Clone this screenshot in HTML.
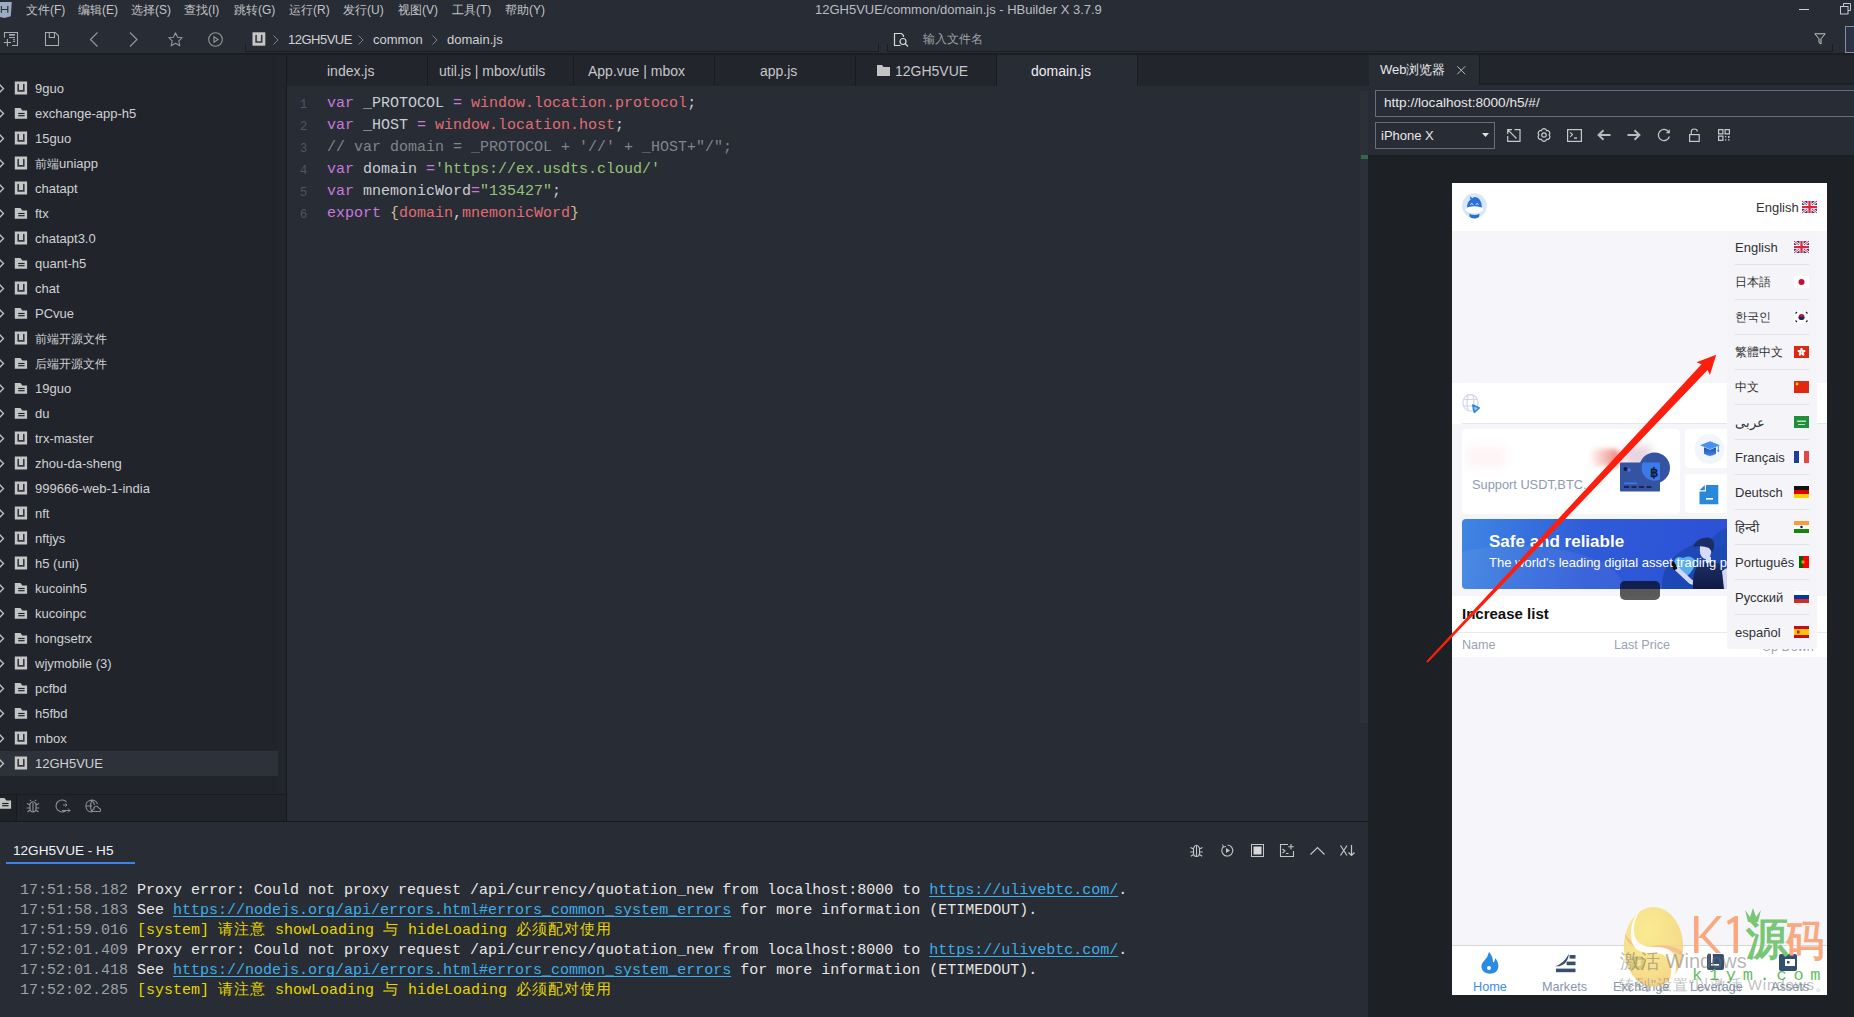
<!DOCTYPE html><html><head><meta charset="utf-8"><style>
*{margin:0;padding:0;box-sizing:border-box}
html,body{width:1854px;height:1017px;overflow:hidden;background:#282c34;font-family:"Liberation Sans",sans-serif;color:#c8c8c8}
.a{position:absolute}
.t{position:absolute;white-space:nowrap;line-height:1}
svg{position:absolute;overflow:visible}
.menu{font-size:12px;color:#c2c4c8;top:4px}
.code{font-family:"Liberation Mono",monospace;font-size:15px;line-height:22px;white-space:pre;position:absolute}
.kw{color:#c678dd}.rd{color:#e06c75}.gr{color:#98c379}.cm{color:#7f848e}.pl{color:#c9ccd2}.br{color:#d4bf8f}
.ln{position:absolute;font-family:"Liberation Mono",monospace;font-size:12px;color:#4f5663;line-height:22px;white-space:nowrap}
.tx{position:absolute;font-size:13px;color:#cfd1d4;white-space:nowrap;line-height:1}
.con{font-family:"Liberation Mono",monospace;font-size:15px;line-height:20px;white-space:pre;position:absolute;color:#e6e6e6}
.con .ts{color:#9da2a8}
.con u{color:#3eaee8;text-underline-offset:1.5px;text-decoration-skip-ink:none}
.con .y{color:#e5d600}
.cj{letter-spacing:1px}
.tab{position:absolute;top:55px;height:31px;background:#22252b;border-right:1px solid #191b1f}
.tab .tt{position:absolute;top:9px;font-size:13px;color:#c5c7ca;white-space:nowrap;line-height:1}
.ph{font-family:"Liberation Sans",sans-serif}
.dd{position:absolute;left:1735px;font-size:13px;color:#303133;white-space:nowrap;line-height:1}
.sep{position:absolute;left:1735px;width:74px;height:1px;background:#dfe3ea}
</style></head><body>
<div class="a" style="left:0px;top:0px;width:1854px;height:54px;background:#282c34;"></div>
<div class="a" style="left:0px;top:53px;width:1854px;height:2px;background:#1b1d22;"></div>
<div class="a" style="left:0px;top:55px;width:286px;height:739px;background:#22262c;"></div>
<div class="a" style="left:0px;top:55px;width:278px;height:739px;background:#21252b;"></div>
<div class="a" style="left:0px;top:794px;width:286px;height:1px;background:#1a1c21;"></div>
<div class="a" style="left:0px;top:795px;width:286px;height:26px;background:#21252b;"></div>
<div class="a" style="left:286px;top:55px;width:1px;height:766px;background:#17191d;"></div>
<div class="a" style="left:287px;top:55px;width:1081px;height:31px;background:#22252b;"></div>
<div class="a" style="left:287px;top:86px;width:1081px;height:735px;background:#282c34;"></div>
<div class="a" style="left:1360px;top:91px;width:8px;height:632px;background:#2c3039;"></div>
<div class="a" style="left:1361px;top:155px;width:7px;height:4px;background:#2f6b4b;"></div>
<div class="a" style="left:1368px;top:55px;width:1px;height:962px;background:#191b1f;"></div>
<div class="a" style="left:0px;top:821px;width:1368px;height:1px;background:#17191d;"></div>
<div class="a" style="left:0px;top:822px;width:1368px;height:195px;background:#282c34;"></div>
<div class="a" style="left:1368px;top:55px;width:486px;height:962px;background:#1d2025;"></div>
<svg style="left:0;top:0" width="14" height="20" viewBox="0 0 14 20"><path d="M-2 2H11.8L10.8 16.3L4.5 17.9L-2 16.5Z" fill="#9cabc4"/><path d="M1.4 6V12.8M7.8 6V12.8M1.4 9.5H7.8" stroke="#2a2e36" stroke-width="1.15"/></svg>
<div class="t menu" style="left:26px">文件(F)</div>
<div class="t menu" style="left:78px">编辑(E)</div>
<div class="t menu" style="left:131px">选择(S)</div>
<div class="t menu" style="left:184px">查找(I)</div>
<div class="t menu" style="left:234px">跳转(G)</div>
<div class="t menu" style="left:289px">运行(R)</div>
<div class="t menu" style="left:343px">发行(U)</div>
<div class="t menu" style="left:398px">视图(V)</div>
<div class="t menu" style="left:452px">工具(T)</div>
<div class="t menu" style="left:505px">帮助(Y)</div>
<div class="t menu" style="left:815px;top:3px;font-size:13px;color:#b8bcc3">12GH5VUE/common/domain.js - HBuilder X 3.7.9</div>
<div class="a" style="left:1799px;top:9px;width:10px;height:1px;background:#c8d0de;"></div>
<svg style="left:1840px;top:3px" width="12" height="12"><path d="M3.5 3.5V0.5H10.5V7.5H8" fill="none" stroke="#c0c8d8" stroke-width="1"/><rect x="0.5" y="3.5" width="7.5" height="7.5" fill="none" stroke="#c0c8d8" stroke-width="1"/></svg>
<svg style="left:0;top:26px" width="20" height="22"><path d="M4.5 11.8V6.5H17.5V19.5H12" fill="none" stroke="#a9acb2" stroke-width="1.1"/><rect x="9" y="8" width="6" height="1.7" fill="#a9acb2"/><rect x="9" y="11.1" width="6" height="1" fill="#a9acb2"/><rect x="13" y="13.2" width="2" height="1" fill="#a9acb2"/><rect x="13" y="15" width="2" height="1" fill="#a9acb2"/><path d="M7.4 13V20.2M3.8 16.5H11" stroke="#a9acb2" stroke-width="1.1"/></svg>
<svg style="left:45px;top:32px" width="15" height="15"><path d="M0.5 0.5H10.2L13.5 3.8V13.5H0.5Z M4.3 0.5V5.5H9.5V0.5" fill="none" stroke="#a9acb2" stroke-width="1.05"/></svg>
<svg style="left:89px;top:31.5px" width="10" height="15"><path d="M8.5 0.5L1.5 7.5L8.5 14.5" fill="none" stroke="#93969c" stroke-width="1.2"/></svg>
<svg style="left:129px;top:31.5px" width="10" height="15"><path d="M1 0.5L8 7.5L1 14.5" fill="none" stroke="#93969c" stroke-width="1.2"/></svg>
<svg style="left:168px;top:31.5px" width="15" height="15"><path d="M7.5 0.8L9.6 5.2L14.3 5.7L10.8 8.9L11.8 13.8L7.5 11.3L3.2 13.8L4.2 8.9L0.7 5.7L5.4 5.2Z" fill="none" stroke="#93969c" stroke-width="1.1" stroke-linejoin="round"/></svg>
<svg style="left:208px;top:31.5px" width="15" height="15"><circle cx="7.5" cy="7.5" r="6.8" fill="none" stroke="#93969c" stroke-width="1.1"/><path d="M6 4.8V10.2L10 7.5Z" fill="none" stroke="#93969c" stroke-width="1.1"/></svg>
<div class="a" style="left:245px;top:44px;width:1px;height:8px;background:#1a1c21;"></div>
<div class="a" style="left:245px;top:51px;width:634px;height:1px;background:#1a1c21;"></div>
<div class="a" style="left:878px;top:44px;width:1px;height:8px;background:#1a1c21;"></div>
<div class="a" style="left:887px;top:44px;width:1px;height:8px;background:#1a1c21;"></div>
<div class="a" style="left:887px;top:51px;width:946px;height:1px;background:#1a1c21;"></div>
<div class="a" style="left:1832px;top:44px;width:1px;height:8px;background:#1a1c21;"></div>
<svg style="left:252px;top:32px" width="14" height="14"><rect x="0.5" y="0.3" width="12.8" height="13.4" fill="#c6c6c6"/><path d="M4.1 3.5V10H9.7V3.5" fill="none" stroke="#34373e" stroke-width="1.6" stroke-linecap="round"/></svg>
<svg style="left:273px;top:35px" width="6" height="10"><path d="M0.5 0.5L5 5L0.5 9.5" fill="none" stroke="#7d8087"/></svg>
<div class="t" style="left:288px;top:33px;font-size:13px;color:#cfd1d4;letter-spacing:-0.5px">12GH5VUE</div>
<svg style="left:358px;top:35px" width="6" height="10"><path d="M0.5 0.5L5 5L0.5 9.5" fill="none" stroke="#7d8087"/></svg>
<div class="t" style="left:373px;top:33px;font-size:13px;color:#cfd1d4">common</div>
<svg style="left:432px;top:35px" width="6" height="10"><path d="M0.5 0.5L5 5L0.5 9.5" fill="none" stroke="#7d8087"/></svg>
<div class="t" style="left:447px;top:33px;font-size:13px;color:#cfd1d4">domain.js</div>
<svg style="left:894px;top:33px" width="16" height="14"><path d="M6.5 12.5H0.5V0.5H7.5L9.5 2.5V4" fill="none" stroke="#d8d8d8" stroke-width="1.2"/><circle cx="9" cy="8.5" r="3" fill="none" stroke="#d8d8d8" stroke-width="1.2"/><path d="M11.2 10.7L14 13.5" stroke="#d8d8d8" stroke-width="1.2"/></svg>
<div class="t" style="left:923px;top:33px;font-size:12px;color:#9fa2a8">输入文件名</div>
<svg style="left:1814px;top:33px" width="12" height="12"><path d="M0.8 0.8H11.2L7 5.8V11L5 9.5V5.8Z" fill="none" stroke="#c8c8c8" stroke-width="1"/></svg>
<div class="a" style="left:1845px;top:26px;width:12px;height:27px;background:#2b3245;border:1px solid #858fa3"></div>
<svg style="left:-1px;top:84px" width="6" height="10"><path d="M0.5 0.5L4.5 4.5L0.5 8.5" fill="none" stroke="#c4c4c4" stroke-width="1.3"/></svg>
<svg style="left:14px;top:81px" width="14" height="14"><rect x="0.8" y="0.5" width="12.3" height="13" fill="#c6c6c6"/><path d="M4.2 3.6V9.9H9.8V3.6" fill="none" stroke="#34373e" stroke-width="1.6" stroke-linecap="round"/></svg>
<div class="tx" style="left:35px;top:82px">9guo</div>
<svg style="left:-1px;top:109px" width="6" height="10"><path d="M0.5 0.5L4.5 4.5L0.5 8.5" fill="none" stroke="#c4c4c4" stroke-width="1.3"/></svg>
<svg style="left:14px;top:108px" width="14" height="12"><path d="M0.8 0H6.5L8.3 2.5H13.1V10.7H0.8Z" fill="#c4c4c4"/><rect x="4.2" y="4.9" width="6.4" height="1.2" fill="#21252b"/><rect x="4.2" y="7.1" width="6.4" height="1.2" fill="#21252b"/></svg>
<div class="tx" style="left:35px;top:107px">exchange-app-h5</div>
<svg style="left:-1px;top:134px" width="6" height="10"><path d="M0.5 0.5L4.5 4.5L0.5 8.5" fill="none" stroke="#c4c4c4" stroke-width="1.3"/></svg>
<svg style="left:14px;top:131px" width="14" height="14"><rect x="0.8" y="0.5" width="12.3" height="13" fill="#c6c6c6"/><path d="M4.2 3.6V9.9H9.8V3.6" fill="none" stroke="#34373e" stroke-width="1.6" stroke-linecap="round"/></svg>
<div class="tx" style="left:35px;top:132px">15guo</div>
<svg style="left:-1px;top:159px" width="6" height="10"><path d="M0.5 0.5L4.5 4.5L0.5 8.5" fill="none" stroke="#c4c4c4" stroke-width="1.3"/></svg>
<svg style="left:14px;top:156px" width="14" height="14"><rect x="0.8" y="0.5" width="12.3" height="13" fill="#c6c6c6"/><path d="M4.2 3.6V9.9H9.8V3.6" fill="none" stroke="#34373e" stroke-width="1.6" stroke-linecap="round"/></svg>
<div class="tx" style="left:35px;top:157px"><span style="font-size:12px">前端</span>uniapp</div>
<svg style="left:-1px;top:184px" width="6" height="10"><path d="M0.5 0.5L4.5 4.5L0.5 8.5" fill="none" stroke="#c4c4c4" stroke-width="1.3"/></svg>
<svg style="left:14px;top:181px" width="14" height="14"><rect x="0.8" y="0.5" width="12.3" height="13" fill="#c6c6c6"/><path d="M4.2 3.6V9.9H9.8V3.6" fill="none" stroke="#34373e" stroke-width="1.6" stroke-linecap="round"/></svg>
<div class="tx" style="left:35px;top:182px">chatapt</div>
<svg style="left:-1px;top:209px" width="6" height="10"><path d="M0.5 0.5L4.5 4.5L0.5 8.5" fill="none" stroke="#c4c4c4" stroke-width="1.3"/></svg>
<svg style="left:14px;top:208px" width="14" height="12"><path d="M0.8 0H6.5L8.3 2.5H13.1V10.7H0.8Z" fill="#c4c4c4"/><rect x="4.2" y="4.9" width="6.4" height="1.2" fill="#21252b"/><rect x="4.2" y="7.1" width="6.4" height="1.2" fill="#21252b"/></svg>
<div class="tx" style="left:35px;top:207px">ftx</div>
<svg style="left:-1px;top:234px" width="6" height="10"><path d="M0.5 0.5L4.5 4.5L0.5 8.5" fill="none" stroke="#c4c4c4" stroke-width="1.3"/></svg>
<svg style="left:14px;top:231px" width="14" height="14"><rect x="0.8" y="0.5" width="12.3" height="13" fill="#c6c6c6"/><path d="M4.2 3.6V9.9H9.8V3.6" fill="none" stroke="#34373e" stroke-width="1.6" stroke-linecap="round"/></svg>
<div class="tx" style="left:35px;top:232px">chatapt3.0</div>
<svg style="left:-1px;top:259px" width="6" height="10"><path d="M0.5 0.5L4.5 4.5L0.5 8.5" fill="none" stroke="#c4c4c4" stroke-width="1.3"/></svg>
<svg style="left:14px;top:258px" width="14" height="12"><path d="M0.8 0H6.5L8.3 2.5H13.1V10.7H0.8Z" fill="#c4c4c4"/><rect x="4.2" y="4.9" width="6.4" height="1.2" fill="#21252b"/><rect x="4.2" y="7.1" width="6.4" height="1.2" fill="#21252b"/></svg>
<div class="tx" style="left:35px;top:257px">quant-h5</div>
<svg style="left:-1px;top:284px" width="6" height="10"><path d="M0.5 0.5L4.5 4.5L0.5 8.5" fill="none" stroke="#c4c4c4" stroke-width="1.3"/></svg>
<svg style="left:14px;top:281px" width="14" height="14"><rect x="0.8" y="0.5" width="12.3" height="13" fill="#c6c6c6"/><path d="M4.2 3.6V9.9H9.8V3.6" fill="none" stroke="#34373e" stroke-width="1.6" stroke-linecap="round"/></svg>
<div class="tx" style="left:35px;top:282px">chat</div>
<svg style="left:-1px;top:309px" width="6" height="10"><path d="M0.5 0.5L4.5 4.5L0.5 8.5" fill="none" stroke="#c4c4c4" stroke-width="1.3"/></svg>
<svg style="left:14px;top:308px" width="14" height="12"><path d="M0.8 0H6.5L8.3 2.5H13.1V10.7H0.8Z" fill="#c4c4c4"/><rect x="4.2" y="4.9" width="6.4" height="1.2" fill="#21252b"/><rect x="4.2" y="7.1" width="6.4" height="1.2" fill="#21252b"/></svg>
<div class="tx" style="left:35px;top:307px">PCvue</div>
<svg style="left:-1px;top:334px" width="6" height="10"><path d="M0.5 0.5L4.5 4.5L0.5 8.5" fill="none" stroke="#c4c4c4" stroke-width="1.3"/></svg>
<svg style="left:14px;top:331px" width="14" height="14"><rect x="0.8" y="0.5" width="12.3" height="13" fill="#c6c6c6"/><path d="M4.2 3.6V9.9H9.8V3.6" fill="none" stroke="#34373e" stroke-width="1.6" stroke-linecap="round"/></svg>
<div class="tx" style="left:35px;top:332px"><span style="font-size:12px">前端开源文件</span></div>
<svg style="left:-1px;top:359px" width="6" height="10"><path d="M0.5 0.5L4.5 4.5L0.5 8.5" fill="none" stroke="#c4c4c4" stroke-width="1.3"/></svg>
<svg style="left:14px;top:358px" width="14" height="12"><path d="M0.8 0H6.5L8.3 2.5H13.1V10.7H0.8Z" fill="#c4c4c4"/><rect x="4.2" y="4.9" width="6.4" height="1.2" fill="#21252b"/><rect x="4.2" y="7.1" width="6.4" height="1.2" fill="#21252b"/></svg>
<div class="tx" style="left:35px;top:357px"><span style="font-size:12px">后端开源文件</span></div>
<svg style="left:-1px;top:384px" width="6" height="10"><path d="M0.5 0.5L4.5 4.5L0.5 8.5" fill="none" stroke="#c4c4c4" stroke-width="1.3"/></svg>
<svg style="left:14px;top:383px" width="14" height="12"><path d="M0.8 0H6.5L8.3 2.5H13.1V10.7H0.8Z" fill="#c4c4c4"/><rect x="4.2" y="4.9" width="6.4" height="1.2" fill="#21252b"/><rect x="4.2" y="7.1" width="6.4" height="1.2" fill="#21252b"/></svg>
<div class="tx" style="left:35px;top:382px">19guo</div>
<svg style="left:-1px;top:409px" width="6" height="10"><path d="M0.5 0.5L4.5 4.5L0.5 8.5" fill="none" stroke="#c4c4c4" stroke-width="1.3"/></svg>
<svg style="left:14px;top:408px" width="14" height="12"><path d="M0.8 0H6.5L8.3 2.5H13.1V10.7H0.8Z" fill="#c4c4c4"/><rect x="4.2" y="4.9" width="6.4" height="1.2" fill="#21252b"/><rect x="4.2" y="7.1" width="6.4" height="1.2" fill="#21252b"/></svg>
<div class="tx" style="left:35px;top:407px">du</div>
<svg style="left:-1px;top:434px" width="6" height="10"><path d="M0.5 0.5L4.5 4.5L0.5 8.5" fill="none" stroke="#c4c4c4" stroke-width="1.3"/></svg>
<svg style="left:14px;top:431px" width="14" height="14"><rect x="0.8" y="0.5" width="12.3" height="13" fill="#c6c6c6"/><path d="M4.2 3.6V9.9H9.8V3.6" fill="none" stroke="#34373e" stroke-width="1.6" stroke-linecap="round"/></svg>
<div class="tx" style="left:35px;top:432px">trx-master</div>
<svg style="left:-1px;top:459px" width="6" height="10"><path d="M0.5 0.5L4.5 4.5L0.5 8.5" fill="none" stroke="#c4c4c4" stroke-width="1.3"/></svg>
<svg style="left:14px;top:456px" width="14" height="14"><rect x="0.8" y="0.5" width="12.3" height="13" fill="#c6c6c6"/><path d="M4.2 3.6V9.9H9.8V3.6" fill="none" stroke="#34373e" stroke-width="1.6" stroke-linecap="round"/></svg>
<div class="tx" style="left:35px;top:457px">zhou-da-sheng</div>
<svg style="left:-1px;top:484px" width="6" height="10"><path d="M0.5 0.5L4.5 4.5L0.5 8.5" fill="none" stroke="#c4c4c4" stroke-width="1.3"/></svg>
<svg style="left:14px;top:481px" width="14" height="14"><rect x="0.8" y="0.5" width="12.3" height="13" fill="#c6c6c6"/><path d="M4.2 3.6V9.9H9.8V3.6" fill="none" stroke="#34373e" stroke-width="1.6" stroke-linecap="round"/></svg>
<div class="tx" style="left:35px;top:482px">999666-web-1-india</div>
<svg style="left:-1px;top:509px" width="6" height="10"><path d="M0.5 0.5L4.5 4.5L0.5 8.5" fill="none" stroke="#c4c4c4" stroke-width="1.3"/></svg>
<svg style="left:14px;top:506px" width="14" height="14"><rect x="0.8" y="0.5" width="12.3" height="13" fill="#c6c6c6"/><path d="M4.2 3.6V9.9H9.8V3.6" fill="none" stroke="#34373e" stroke-width="1.6" stroke-linecap="round"/></svg>
<div class="tx" style="left:35px;top:507px">nft</div>
<svg style="left:-1px;top:534px" width="6" height="10"><path d="M0.5 0.5L4.5 4.5L0.5 8.5" fill="none" stroke="#c4c4c4" stroke-width="1.3"/></svg>
<svg style="left:14px;top:531px" width="14" height="14"><rect x="0.8" y="0.5" width="12.3" height="13" fill="#c6c6c6"/><path d="M4.2 3.6V9.9H9.8V3.6" fill="none" stroke="#34373e" stroke-width="1.6" stroke-linecap="round"/></svg>
<div class="tx" style="left:35px;top:532px">nftjys</div>
<svg style="left:-1px;top:559px" width="6" height="10"><path d="M0.5 0.5L4.5 4.5L0.5 8.5" fill="none" stroke="#c4c4c4" stroke-width="1.3"/></svg>
<svg style="left:14px;top:556px" width="14" height="14"><rect x="0.8" y="0.5" width="12.3" height="13" fill="#c6c6c6"/><path d="M4.2 3.6V9.9H9.8V3.6" fill="none" stroke="#34373e" stroke-width="1.6" stroke-linecap="round"/></svg>
<div class="tx" style="left:35px;top:557px">h5 (uni)</div>
<svg style="left:-1px;top:584px" width="6" height="10"><path d="M0.5 0.5L4.5 4.5L0.5 8.5" fill="none" stroke="#c4c4c4" stroke-width="1.3"/></svg>
<svg style="left:14px;top:583px" width="14" height="12"><path d="M0.8 0H6.5L8.3 2.5H13.1V10.7H0.8Z" fill="#c4c4c4"/><rect x="4.2" y="4.9" width="6.4" height="1.2" fill="#21252b"/><rect x="4.2" y="7.1" width="6.4" height="1.2" fill="#21252b"/></svg>
<div class="tx" style="left:35px;top:582px">kucoinh5</div>
<svg style="left:-1px;top:609px" width="6" height="10"><path d="M0.5 0.5L4.5 4.5L0.5 8.5" fill="none" stroke="#c4c4c4" stroke-width="1.3"/></svg>
<svg style="left:14px;top:608px" width="14" height="12"><path d="M0.8 0H6.5L8.3 2.5H13.1V10.7H0.8Z" fill="#c4c4c4"/><rect x="4.2" y="4.9" width="6.4" height="1.2" fill="#21252b"/><rect x="4.2" y="7.1" width="6.4" height="1.2" fill="#21252b"/></svg>
<div class="tx" style="left:35px;top:607px">kucoinpc</div>
<svg style="left:-1px;top:634px" width="6" height="10"><path d="M0.5 0.5L4.5 4.5L0.5 8.5" fill="none" stroke="#c4c4c4" stroke-width="1.3"/></svg>
<svg style="left:14px;top:633px" width="14" height="12"><path d="M0.8 0H6.5L8.3 2.5H13.1V10.7H0.8Z" fill="#c4c4c4"/><rect x="4.2" y="4.9" width="6.4" height="1.2" fill="#21252b"/><rect x="4.2" y="7.1" width="6.4" height="1.2" fill="#21252b"/></svg>
<div class="tx" style="left:35px;top:632px">hongsetrx</div>
<svg style="left:-1px;top:659px" width="6" height="10"><path d="M0.5 0.5L4.5 4.5L0.5 8.5" fill="none" stroke="#c4c4c4" stroke-width="1.3"/></svg>
<svg style="left:14px;top:656px" width="14" height="14"><rect x="0.8" y="0.5" width="12.3" height="13" fill="#c6c6c6"/><path d="M4.2 3.6V9.9H9.8V3.6" fill="none" stroke="#34373e" stroke-width="1.6" stroke-linecap="round"/></svg>
<div class="tx" style="left:35px;top:657px">wjymobile (3)</div>
<svg style="left:-1px;top:684px" width="6" height="10"><path d="M0.5 0.5L4.5 4.5L0.5 8.5" fill="none" stroke="#c4c4c4" stroke-width="1.3"/></svg>
<svg style="left:14px;top:683px" width="14" height="12"><path d="M0.8 0H6.5L8.3 2.5H13.1V10.7H0.8Z" fill="#c4c4c4"/><rect x="4.2" y="4.9" width="6.4" height="1.2" fill="#21252b"/><rect x="4.2" y="7.1" width="6.4" height="1.2" fill="#21252b"/></svg>
<div class="tx" style="left:35px;top:682px">pcfbd</div>
<svg style="left:-1px;top:709px" width="6" height="10"><path d="M0.5 0.5L4.5 4.5L0.5 8.5" fill="none" stroke="#c4c4c4" stroke-width="1.3"/></svg>
<svg style="left:14px;top:708px" width="14" height="12"><path d="M0.8 0H6.5L8.3 2.5H13.1V10.7H0.8Z" fill="#c4c4c4"/><rect x="4.2" y="4.9" width="6.4" height="1.2" fill="#21252b"/><rect x="4.2" y="7.1" width="6.4" height="1.2" fill="#21252b"/></svg>
<div class="tx" style="left:35px;top:707px">h5fbd</div>
<svg style="left:-1px;top:734px" width="6" height="10"><path d="M0.5 0.5L4.5 4.5L0.5 8.5" fill="none" stroke="#c4c4c4" stroke-width="1.3"/></svg>
<svg style="left:14px;top:731px" width="14" height="14"><rect x="0.8" y="0.5" width="12.3" height="13" fill="#c6c6c6"/><path d="M4.2 3.6V9.9H9.8V3.6" fill="none" stroke="#34373e" stroke-width="1.6" stroke-linecap="round"/></svg>
<div class="tx" style="left:35px;top:732px">mbox</div>
<div class="a" style="left:0px;top:751px;width:278px;height:25px;background:#2d3139;"></div>
<svg style="left:-1px;top:759px" width="6" height="10"><path d="M0.5 0.5L4.5 4.5L0.5 8.5" fill="none" stroke="#c4c4c4" stroke-width="1.3"/></svg>
<svg style="left:14px;top:756px" width="14" height="14"><rect x="0.8" y="0.5" width="12.3" height="13" fill="#c6c6c6"/><path d="M4.2 3.6V9.9H9.8V3.6" fill="none" stroke="#34373e" stroke-width="1.6" stroke-linecap="round"/></svg>
<div class="tx" style="left:35px;top:757px">12GH5VUE</div>
<div class="a" style="left:0;top:795px;width:17px;height:27px;background:#1f2227;border-right:1px solid #191b1f;border-bottom:1px solid #191b1f;border-bottom-right-radius:3px"></div>
<svg style="left:-2px;top:798px" width="14" height="12"><path d="M0.8 0H6.5L8.3 2.5H13.1V10.7H0.8Z" fill="#c4c4c4"/><rect x="4.2" y="4.9" width="6.4" height="1.2" fill="#1f2227"/><rect x="4.2" y="7.1" width="6.4" height="1.2" fill="#1f2227"/></svg>
<svg style="left:26px;top:799px" width="14" height="14"><path d="M4 4.5Q7 1 10 4.5V9.5Q10 13 7 13Q4 13 4 9.5Z M7 4V13 M4 6L1 4.5M10 6L13 4.5M4 9H0.8M10 9H13.2M4 11L1.5 13M10 11L12.5 13M5 2L4 0.8M9 2L10 0.8" fill="none" stroke="#8e9197" stroke-width="1.1"/></svg>
<svg style="left:55px;top:799px" width="16" height="14"><path d="M11.5 3A6 6 0 1 0 11 11.5" fill="none" stroke="#8e9197" stroke-width="1.1"/><path d="M7 11.5H15M13 9.5L15 11.5L13 13.5M8 6H12M10.5 4.5L12 6L10.5 7.5" fill="none" stroke="#8e9197" stroke-width="1"/></svg>
<svg style="left:85px;top:799px" width="16" height="14"><path d="M7 13A6 6 0 1 1 12.5 5M1 7H7M7 1Q4 7 7 13M7 1Q9 4 9.5 6" fill="none" stroke="#8e9197" stroke-width="1.1"/><path d="M7 12.5H14.5Q16 12.5 15.5 10.5Q15 9 13.5 9Q12.5 6.5 10.5 7.5Q8.5 8 9 10Q7 10.5 7 12.5Z" fill="none" stroke="#8e9197" stroke-width="1.1"/></svg>
<div class="tab" style="left:288px;width:140px;background:#22252b"></div>
<div class="tab" style="left:428px;width:146px;background:#22252b"></div>
<div class="tab" style="left:574px;width:141px;background:#22252b"></div>
<div class="tab" style="left:715px;width:141px;background:#22252b"></div>
<div class="tab" style="left:856px;width:141px;background:#22252b"></div>
<div class="tab" style="left:997px;width:141px;background:#282c34"></div>
<div class="t" style="left:327px;top:64px;font-size:14px;color:#c5c7ca">index.js</div>
<div class="t" style="left:439px;top:64px;font-size:14px;color:#c5c7ca">util.js | mbox/utils</div>
<div class="t" style="left:588px;top:64px;font-size:14px;color:#c5c7ca">App.vue | mbox</div>
<div class="t" style="left:760px;top:64px;font-size:14px;color:#c5c7ca">app.js</div>
<div class="t" style="left:895px;top:64px;font-size:14px;color:#c5c7ca">12GH5VUE</div>
<div class="t" style="left:1031px;top:64px;font-size:14px;color:#eceef1">domain.js</div>
<svg style="left:877px;top:65px" width="13" height="11"><path d="M0 0H5L6.5 2H13V11H0Z" fill="#c4c4c4"/></svg>
<div class="ln" style="left:300px;top:94px">1<br>2<br>3<br>4<br>5<br>6</div>
<div class="code" style="left:327px;top:93px"><span class="kw">var</span><span class="pl"> _PROTOCOL </span><span class="kw">=</span> <span class="rd">window.location.protocol</span><span class="pl">;</span>
<span class="kw">var</span><span class="pl"> _HOST </span><span class="kw">=</span> <span class="rd">window.location.host</span><span class="pl">;</span>
<span class="cm">// var domain = _PROTOCOL + '//' + _HOST+"/";</span>
<span class="kw">var</span><span class="pl"> domain </span><span class="kw">=</span><span class="gr">'https://ex.usdts.cloud/'</span>
<span class="kw">var</span><span class="pl"> mnemonicWord</span><span class="kw">=</span><span class="gr">"135427"</span><span class="pl">;</span>
<span class="kw">export</span> <span class="br">{</span><span class="rd">domain</span><span class="pl">,</span><span class="rd">mnemonicWord</span><span class="br">}</span></div>
<div class="t" style="left:13px;top:844px;font-size:13.6px;color:#f0f2f4">12GH5VUE - H5</div>
<div class="a" style="left:6px;top:862px;width:129px;height:1.5px;background:#3f80ea;"></div>
<svg style="left:1190px;top:843px" width="13" height="14"><path d="M3.5 5Q6.5 -0.5 9.5 5V10Q9.5 13.5 6.5 13.5Q3.5 13.5 3.5 10Z M6.5 3V13.5M3.5 6L0.5 4.5M9.5 6L12.5 4.5M3.5 9H0.3M9.5 9H12.7M3.5 11.5L0.8 13.3M9.5 11.5L12.2 13.3" fill="none" stroke="#c4c6ca" stroke-width="1.1"/></svg>
<svg style="left:1221px;top:844px" width="13" height="13"><path d="M2.5 2.5A5.5 5.5 0 1 0 6.5 1" fill="none" stroke="#c4c6ca" stroke-width="1.1"/><path d="M1.5 0.5L2.5 3L5 2.5" fill="none" stroke="#c4c6ca" stroke-width="1"/><path d="M5 4V9L9 6.5Z" fill="#c4c6ca"/></svg>
<svg style="left:1251px;top:844px" width="13" height="13"><rect x="0.5" y="0.5" width="12" height="12" fill="none" stroke="#c4c6ca"/><rect x="2.5" y="2.5" width="8" height="8" fill="#d8d8d8"/></svg>
<svg style="left:1280px;top:844px" width="15" height="13"><path d="M8 0.5H0.5V12.5H13.5V7" fill="none" stroke="#c4c6ca" stroke-width="1.1"/><path d="M2.5 5L5 7L2.5 9M6 9.5H8.5M11 0V5.5M8.3 2.8H13.7" fill="none" stroke="#c4c6ca" stroke-width="1.1"/></svg>
<svg style="left:1310px;top:846px" width="15" height="9"><path d="M0.5 8.5L7.5 1.5L14.5 8.5" fill="none" stroke="#c4c6ca" stroke-width="1.2"/></svg>
<svg style="left:1340px;top:845px" width="15" height="11"><path d="M0.5 0.5L7 10.5M7 0.5L0.5 10.5M11.5 0V10.5M8.5 7.5L11.5 10.5L14.5 7.5" fill="none" stroke="#c4c6ca" stroke-width="1.2"/></svg>
<div class="con" style="left:20px;top:881px"><span class="ts">17:51:58.182</span> Proxy error: Could not proxy request /api/currency/quotation_new from localhost:8000 to <u>https://ulivebtc.com/</u>.
<span class="ts">17:51:58.183</span> See <u>https://nodejs.org/api/errors.html#errors_common_system_errors</u> for more information (ETIMEDOUT).
<span class="ts">17:51:59.016</span> <span class="y">[system] <span class="cj">请注意</span> showLoading <span class="cj">与</span> hideLoading <span class="cj">必须配对使用</span></span>
<span class="ts">17:52:01.409</span> Proxy error: Could not proxy request /api/currency/quotation_new from localhost:8000 to <u>https://ulivebtc.com/</u>.
<span class="ts">17:52:01.418</span> See <u>https://nodejs.org/api/errors.html#errors_common_system_errors</u> for more information (ETIMEDOUT).
<span class="ts">17:52:02.285</span> <span class="y">[system] <span class="cj">请注意</span> showLoading <span class="cj">与</span> hideLoading <span class="cj">必须配对使用</span></span></div>
<div class="a" style="left:1368px;top:55px;width:486px;height:28px;background:#22252b;"></div>
<div class="a" style="left:1369px;top:55px;width:110px;height:30px;background:#282c34;"></div>
<div class="a" style="left:1479px;top:55px;width:1px;height:30px;background:#191b1f;"></div>
<div class="a" style="left:1368px;top:85px;width:486px;height:70px;background:#282c34;"></div>
<div class="t" style="left:1380px;top:63px;font-size:13px;color:#e6e8ea">Web浏览器</div>
<svg style="left:1457px;top:66px" width="9" height="9"><path d="M0.3 0.3L8.2 8.2M8.2 0.3L0.3 8.2" stroke="#c8c8c8" stroke-width="0.9"/></svg>
<div class="a" style="left:1375px;top:90px;width:490px;height:27px;border:1px solid #666e80;background:#282c34"></div>
<div class="t" style="left:1384px;top:96px;font-size:13.6px;color:#e6e8ea">http://localhost:8000/h5/#/</div>
<div class="a" style="left:1375px;top:122px;width:120px;height:27px;border:1px solid #666e80;background:#282c34"></div>
<div class="t" style="left:1381px;top:129px;font-size:13px;color:#e6e8ea">iPhone X</div>
<svg style="left:1482px;top:133px" width="7" height="4"><path d="M0 0H7L3.5 4Z" fill="#e0e0e0"/></svg>
<svg style="left:1507px;top:129px" width="14" height="13"><path d="M0.7 5V0.7H5M0.7 0.7L9.5 9.5M0.7 7V12.3H13V0.7H7.5" fill="none" stroke="#c6c8cc" stroke-width="1.2"/></svg>
<svg style="left:1537px;top:128px" width="14" height="14" viewBox="0 0 14 14"><path d="M5.3 1.2Q7 0 8.7 1.2L9.6 2.6L11.3 2.7Q12.9 3.6 12.9 5.6L12.1 7L12.9 8.4Q12.9 10.4 11.3 11.3L9.6 11.4L8.7 12.8Q7 14 5.3 12.8L4.4 11.4L2.7 11.3Q1.1 10.4 1.1 8.4L1.9 7L1.1 5.6Q1.1 3.6 2.7 2.7L4.4 2.6Z" fill="none" stroke="#c6c8cc" stroke-width="1.2"/><circle cx="7" cy="7" r="2.2" fill="none" stroke="#c6c8cc" stroke-width="1.2"/></svg>
<svg style="left:1567px;top:129px" width="15" height="13"><rect x="0.6" y="0.6" width="13.8" height="11.8" fill="none" stroke="#c6c8cc" stroke-width="1.2"/><path d="M3 3.3L5.6 5.6L3 7.9" fill="none" stroke="#c6c8cc" stroke-width="1.1"/><path d="M7 9H10" stroke="#c6c8cc" stroke-width="1.4"/></svg>
<svg style="left:1597px;top:129px" width="14" height="12"><path d="M13.5 6H2M6.5 1.2L1.5 6L6.5 10.8" fill="none" stroke="#b9bbbf" stroke-width="1.9"/></svg>
<svg style="left:1627px;top:129px" width="14" height="12"><path d="M0.5 6H12M7.5 1.2L12.5 6L7.5 10.8" fill="none" stroke="#b9bbbf" stroke-width="1.9"/></svg>
<svg style="left:1657px;top:128px" width="14" height="14"><path d="M11.2 3.3A5.6 5.6 0 1 0 12.4 8.5" fill="none" stroke="#c6c8cc" stroke-width="1.2"/><path d="M12.8 1.2V5.2H8.8Z" fill="#c6c8cc"/></svg>
<svg style="left:1689px;top:128px" width="11" height="14"><path d="M2.3 6.5V4Q2.3 1 5.3 1Q8.3 1 8.3 3.5" fill="none" stroke="#c6c8cc" stroke-width="1.2"/><rect x="0.6" y="6.6" width="9.6" height="6.8" fill="none" stroke="#c6c8cc" stroke-width="1.2"/></svg>
<svg style="left:1718px;top:129px" width="12" height="12"><path d="M0.6 0.6H4.9V4.9H0.6Z M7.1 0.6H11.4V4.9H7.1Z M0.6 7.1H4.9V11.4H0.6Z" fill="none" stroke="#c6c8cc" stroke-width="1.2"/><path d="M7 7H8.3V8.3H7Z M10 7H11.5V9H10Z M7 10.3H8.3V11.5H7Z M10 10.3H11.5V11.5H10Z" fill="#c6c8cc"/></svg>
<div class="a" style="left:1452px;top:183px;width:375px;height:812px;background:#f6f6fa;"></div>
<div class="a" style="left:1452px;top:183px;width:375px;height:48px;background:#ffffff;"></div>
<svg style="left:1458px;top:190px" width="34" height="34" viewBox="0 0 34 34"><circle cx="16.4" cy="15.7" r="12.4" fill="#d7e6fb"/><path d="M9 17.6Q9 12 12.6 9.6L11.6 6L14.4 8.2Q15.5 6.8 17.2 6.9Q23.8 8 24 17.6Z" fill="#2a6fd6"/><path d="M12.3 14.6Q13.8 12.6 15.3 14.6M17.6 14.6Q19.1 12.6 20.6 14.6" stroke="#dfeafd" stroke-width="1" fill="none"/><path d="M7 19.5Q10 16.2 16.4 16.2Q22.8 16.2 25.8 19.5Q22.8 23.2 16.4 23.2Q10 23.2 7 19.5Z" fill="#fff"/><path d="M11.2 23.8Q16.4 26.2 21.6 23.8L21 27Q16.4 30 11.8 27Z" fill="#2a6fd6"/></svg>
<div class="t ph" style="left:1756px;top:201px;font-size:13px;color:#333">English</div>
<svg style="left:1802px;top:201px" width="15" height="12" viewBox="0 0 30 24" preserveAspectRatio="none"><rect width="30" height="24" fill="#2b3a8c"/><path d="M0 0L30 24M30 0L0 24" stroke="#fff" stroke-width="5"/><path d="M0 0L30 24M30 0L0 24" stroke="#d7263d" stroke-width="2"/><path d="M15 0V24M0 12H30" stroke="#fff" stroke-width="8"/><path d="M15 0V24M0 12H30" stroke="#d7263d" stroke-width="4.5"/></svg>
<div class="a" style="left:1452px;top:383px;width:375px;height:41px;background:#ffffff;"></div>
<div class="a" style="left:1462px;top:423px;width:365px;height:1px;background:#e3e7ee;"></div>
<svg style="left:1458px;top:388px" width="26" height="28" viewBox="0 0 26 28"><ellipse cx="12.5" cy="14.8" rx="7.6" ry="8.3" fill="none" stroke="#d3d6ea" stroke-width="1.3"/><path d="M10.3 6.8Q7.8 14.8 10.3 22.8M14.7 6.8Q17.2 14.8 14.7 22.8M5.3 11.5H19.7M5.3 18H14" fill="none" stroke="#d3d6ea" stroke-width="1.2"/><path d="M14.8 17L21.2 20L16.3 24.3Z" fill="#9cc8f2" stroke="#2e86de" stroke-width="1.6" stroke-linejoin="round"/></svg>
<div class="a" style="left:1462px;top:429px;width:218px;height:85px;background:#ffffff;border-radius:4px"></div>
<div class="a" style="left:1466px;top:446px;width:40px;height:22px;background:rgba(245,200,205,0.18);filter:blur(5px)"></div>
<div class="a" style="left:1590px;top:449px;width:30px;height:17px;background:linear-gradient(90deg,rgba(240,215,215,0.1),rgba(235,70,60,0.7));filter:blur(2.5px);border-radius:6px"></div>
<div class="a" style="left:1625px;top:446px;width:26px;height:20px;background:rgba(190,130,170,0.35);filter:blur(4px)"></div>
<div class="t ph" style="left:1472px;top:479px;font-size:12.8px;color:#8d9bb4">Support USDT,BTC.</div>
<svg style="left:1615px;top:450px" width="56" height="45" viewBox="0 0 56 45"><defs><clipPath id="cc"><rect x="5" y="12.4" width="40" height="29.1"/></clipPath></defs><circle cx="39.6" cy="17.8" r="15.4" fill="#3553a3"/><rect x="5" y="12.4" width="40" height="29.1" rx="1" fill="#3553a3"/><circle cx="39.6" cy="17.8" r="13" fill="#3b7ae8" clip-path="url(#cc)"/><text x="34.5" y="27" font-family="Liberation Serif" font-weight="bold" font-size="13" fill="#111a33">฿</text><circle cx="10.5" cy="19" r="2" fill="#111a33"/><circle cx="14" cy="20" r="1.8" fill="#3b7ae8"/><rect x="9" y="32.5" width="13" height="1.6" fill="#3b7ae8"/><path d="M9 37H14M16.5 37H21.5M24 37H29M31.5 37H36.5" stroke="#111a33" stroke-width="1.6"/></svg>
<div class="a" style="left:1685px;top:429px;width:60px;height:39px;background:#ffffff;border-radius:4px"></div>
<div class="a" style="left:1685px;top:474px;width:60px;height:39px;background:#ffffff;border-radius:4px"></div>
<svg style="left:1694px;top:434px" width="31" height="31" viewBox="0 0 31 31"><defs><linearGradient id="capg" x1="0" y1="0" x2="0" y2="1"><stop offset="0" stop-color="#1f4fa8"/><stop offset="1" stop-color="#3f86ee"/></linearGradient></defs><circle cx="15.5" cy="15" r="14.9" fill="#f1f5fd"/><path d="M10 13.2V19.8Q16 24 22 19.8V13.2L16 15.8Z" fill="url(#capg)"/><path d="M6 11.3L16 7.3L26 11.3L16 15.3Z" fill="#4a90f0"/><path d="M24.3 12V16.2" stroke="#3f86ee" stroke-width="1"/><circle cx="24.3" cy="16.8" r="1.1" fill="#3f86ee"/></svg>
<svg style="left:1699px;top:485px" width="20" height="20" viewBox="0 0 20 20"><path d="M7 0H19.3V19.2H0.5V6.5H7Z" fill="#2a88db"/><path d="M0.5 5.2L5.8 0V5.2Z" fill="#2a88db"/><rect x="7" y="13" width="7" height="1.6" fill="#fff"/></svg>
<div class="a" style="left:1462px;top:519px;width:280px;height:70px;border-radius:4px;overflow:hidden;background:linear-gradient(100deg,#3f86e3 0%,#2f5bd8 45%,#2b4fd6 100%)"><div class="a" style="left:-50px;top:27px;width:210px;height:80px;border-radius:50%;background:rgba(255,255,255,0.06)"></div><div class="a" style="left:200px;top:20px;width:120px;height:90px;border-radius:50%;background:#1f47b8"></div></div>
<svg style="left:1650px;top:519px" width="77" height="70" viewBox="0 0 77 70"><defs><clipPath id="bc"><rect width="77" height="70"/></clipPath><linearGradient id="sh" x1="0" y1="0" x2="0" y2="1"><stop offset="0" stop-color="#1d2f66"/><stop offset="1" stop-color="#0f1a45"/></linearGradient></defs><g clip-path="url(#bc)"><circle cx="90" cy="42" r="36" fill="#1f4cbb"/><polygon points="13,70 48,40 77,24 77,70" fill="#1b48b2"/><path d="M24 43Q26 36 33 39Q40 35 45 41Q46 50 36 58Q30 52 24 43Z" fill="#5ab0ee"/><path d="M26 49L41 63Q46 65 52 57" fill="none" stroke="#d3d8f7" stroke-width="4.5" stroke-linecap="round"/><rect x="22" y="43" width="4" height="8" rx="1" fill="#111" transform="rotate(-25 24 47)"/><path d="M56 38H61V46H56Z" fill="#d6dcf8"/><path d="M43 70Q42 56 47 47Q56 42 68 44Q77 48 77 70Z" fill="url(#sh)"/><path d="M50 27Q49 36 53 39L57 41L60 38Q62 33 61 27Z" fill="#d6dcf8"/><path d="M43 27Q47 20 53 19Q62 17 64 24Q65 30 62 33L59 29Q52 26 45 28Z" fill="#1b2f66"/><path d="M72 52L77 49V70H74Z" fill="#d3d8f7"/></g></svg>
<div class="t ph" style="left:1489px;top:533px;font-size:17px;font-weight:bold;color:#fff">Safe and reliable</div>
<div class="t ph" style="left:1489px;top:556px;font-size:13px;color:#fff">The world's leading digital asset trading p</div>
<div class="a" style="left:1452px;top:596px;width:375px;height:61px;background:#ffffff;"></div>
<div class="a" style="left:1620px;top:581px;width:40px;height:19px;border-radius:5px;background:rgba(0,0,0,0.64)"></div>
<div class="t ph" style="left:1462px;top:606px;font-size:15px;font-weight:bold;color:#111">Increase list</div>
<div class="a" style="left:1452px;top:632px;width:375px;height:1px;background:#e6e9ef;"></div>
<div class="t ph" style="left:1462px;top:639px;font-size:12.6px;color:#98a3b5">Name</div>
<div class="t ph" style="left:1614px;top:639px;font-size:12.6px;color:#98a3b5">Last Price</div>
<div class="t ph" style="left:1762px;top:640.5px;font-size:12.6px;color:#98a3b5">Up Down</div>
<div class="a" style="left:1452px;top:945px;width:375px;height:1px;background:#d6d6d6;"></div>
<div class="a" style="left:1452px;top:946px;width:375px;height:49px;background:#ffffff;"></div>
<svg style="left:1481px;top:952px" width="18" height="22" viewBox="0 0 18 22"><path d="M8 0Q7 5 3 9Q0 12 0.5 15.5Q1.5 21.5 9 21.8Q16.5 21.5 17.3 15Q17.8 10 14 6Q14 10 12 10.5Q12 4 8 0Z" fill="#2b8be0"/><circle cx="8" cy="16" r="2" fill="#fff"/></svg>
<svg style="left:1555px;top:953px" width="21" height="20" viewBox="0 0 21 20"><path d="M0 13.2Q8 11.5 14 0.8Q13.2 7 10 10.2Q6 13.8 0 13.2Z" fill="#34506f"/><rect x="14.6" y="2" width="5.9" height="3.6" fill="#34506f"/><rect x="11.6" y="8.6" width="8.9" height="3.6" fill="#34506f"/><rect x="1" y="15.6" width="19.5" height="3.6" fill="#34506f"/></svg>
<svg style="left:1630px;top:954px" width="18" height="18" viewBox="0 0 18 18"><path d="M3 9A6 6 0 0 1 14 5L16 3V9H10L12 7A3.5 3.5 0 0 0 6 9Z M15 9A6 6 0 0 1 4 13L2 15V9H8L6 11A3.5 3.5 0 0 0 12 9Z" fill="#34506f"/></svg>
<svg style="left:1707px;top:954px" width="17" height="16" viewBox="0 0 17 16"><path d="M0 2Q0 0 2 0H15Q17 0 17 2V14Q17 16 15 16H2Q0 16 0 14Z" fill="#34506f"/><rect x="4" y="10" width="8" height="1.6" fill="#fff"/><rect x="4" y="0" width="1.8" height="9" fill="#fff"/></svg>
<svg style="left:1779px;top:954px" width="18" height="17" viewBox="0 0 18 17"><rect x="0" y="0" width="18" height="17" rx="2" fill="#34506f"/><rect x="6" y="5" width="10" height="7" fill="#fff"/><rect x="8" y="7" width="2.5" height="2.5" fill="#34506f"/></svg>
<div class="t ph" style="left:1473px;top:981px;font-size:12.7px;color:#3a8ee6">Home</div>
<div class="t ph" style="left:1542px;top:981px;font-size:12.7px;color:#8797ad">Markets</div>
<div class="t ph" style="left:1613px;top:981px;font-size:12.7px;color:#8797ad">Exchange</div>
<div class="t ph" style="left:1690px;top:981px;font-size:12.7px;color:#8797ad">Leverage</div>
<div class="t ph" style="left:1771px;top:981px;font-size:12.7px;color:#8797ad">Assets</div>
<div class="a" style="left:1727px;top:231px;width:90px;height:418px;background:#f5f5f9;border-radius:0 0 4px 4px"></div>
<div class="dd ph" style="top:241px">English</div>
<div class="a" style="left:1735px;top:264px;width:74px;height:1px;background:#dfe3ea;"></div>
<div class="dd ph" style="top:276px;font-size:12px">日本語</div>
<div class="a" style="left:1735px;top:299px;width:74px;height:1px;background:#dfe3ea;"></div>
<div class="dd ph" style="top:311px;font-size:12px">한국인</div>
<div class="a" style="left:1735px;top:334px;width:74px;height:1px;background:#dfe3ea;"></div>
<div class="dd ph" style="top:346px;font-size:12px">繁體中文</div>
<div class="a" style="left:1735px;top:369px;width:74px;height:1px;background:#dfe3ea;"></div>
<div class="dd ph" style="top:381px;font-size:12px">中文</div>
<div class="a" style="left:1735px;top:404px;width:74px;height:1px;background:#dfe3ea;"></div>
<div class="dd ph" style="top:416px">عربى</div>
<div class="a" style="left:1735px;top:439px;width:74px;height:1px;background:#dfe3ea;"></div>
<div class="dd ph" style="top:451px">Français</div>
<div class="a" style="left:1735px;top:474px;width:74px;height:1px;background:#dfe3ea;"></div>
<div class="dd ph" style="top:486px">Deutsch</div>
<div class="a" style="left:1735px;top:509px;width:74px;height:1px;background:#dfe3ea;"></div>
<div class="dd ph" style="top:521px">हिन्दी</div>
<div class="a" style="left:1735px;top:544px;width:74px;height:1px;background:#dfe3ea;"></div>
<div class="dd ph" style="top:556px">Português</div>
<div class="a" style="left:1735px;top:579px;width:74px;height:1px;background:#dfe3ea;"></div>
<div class="dd ph" style="top:591px">Русский</div>
<div class="a" style="left:1735px;top:614px;width:74px;height:1px;background:#dfe3ea;"></div>
<div class="dd ph" style="top:626px">español</div>
<svg style="left:1794px;top:241px" width="15" height="12" viewBox="0 0 30 24" preserveAspectRatio="none"><rect width="30" height="24" fill="#2b3a8c"/><path d="M0 0L30 24M30 0L0 24" stroke="#fff" stroke-width="5"/><path d="M0 0L30 24M30 0L0 24" stroke="#d7263d" stroke-width="2"/><path d="M15 0V24M0 12H30" stroke="#fff" stroke-width="8"/><path d="M15 0V24M0 12H30" stroke="#d7263d" stroke-width="4.5"/></svg>
<svg style="left:1794px;top:276px" width="15" height="12"><rect width="15" height="12" fill="#fff"/><circle cx="7.5" cy="6" r="3" fill="#c8102e"/></svg>
<svg style="left:1794px;top:311px" width="15" height="12"><rect width="15" height="12" fill="#fff"/><circle cx="7.5" cy="6" r="3" fill="#c8102e"/><path d="M4.5 6A3 3 0 0 0 10.5 6Z" fill="#003478"/><path d="M1.5 2.5L3 1M12 1L13.5 2.5M1.5 9.5L3 11M12 11L13.5 9.5" stroke="#222" stroke-width="1.2"/></svg>
<svg style="left:1794px;top:346px" width="15" height="12" viewBox="0 0 15 12"><rect width="15" height="12" fill="#de2910"/><ellipse cx="7.5" cy="3.9" rx="1.3" ry="2.1" fill="#fff" transform="rotate(0 7.5 6)"/><ellipse cx="7.5" cy="3.9" rx="1.3" ry="2.1" fill="#fff" transform="rotate(72 7.5 6)"/><ellipse cx="7.5" cy="3.9" rx="1.3" ry="2.1" fill="#fff" transform="rotate(144 7.5 6)"/><ellipse cx="7.5" cy="3.9" rx="1.3" ry="2.1" fill="#fff" transform="rotate(216 7.5 6)"/><ellipse cx="7.5" cy="3.9" rx="1.3" ry="2.1" fill="#fff" transform="rotate(288 7.5 6)"/><circle cx="7.5" cy="6" r="0.6" fill="#de2910"/></svg>
<svg style="left:1794px;top:381px" width="15" height="12"><rect width="15" height="12" fill="#de2910"/><circle cx="3" cy="3" r="1.4" fill="#ffde00"/></svg>
<svg style="left:1794px;top:416px" width="15" height="12"><rect width="15" height="12" fill="#1f8f3a"/><rect x="3" y="4.5" width="9" height="1.5" fill="#fff" opacity="0.7"/><rect x="4" y="8" width="7" height="1" fill="#fff" opacity="0.7"/></svg>
<svg style="left:1794px;top:451px" width="15" height="12"><rect width="5" height="12" fill="#1f3d99"/><rect x="5" width="5" height="12" fill="#fff"/><rect x="10" width="5" height="12" fill="#e84545"/></svg>
<svg style="left:1794px;top:486px" width="15" height="12"><rect width="15" height="4" fill="#111"/><rect y="4" width="15" height="4" fill="#dd0000"/><rect y="8" width="15" height="4" fill="#ffce00"/></svg>
<svg style="left:1794px;top:521px" width="15" height="12"><rect width="15" height="4" fill="#ff9933"/><rect y="4" width="15" height="4" fill="#fff"/><rect y="8" width="15" height="4" fill="#138808"/><circle cx="7.5" cy="6" r="1.2" fill="#000080"/></svg>
<svg style="left:1799px;top:556px" width="10" height="12"><rect width="4" height="12" fill="#006600"/><rect x="4" width="6" height="12" fill="#ff0000"/><circle cx="4" cy="6" r="1.8" fill="#c8a000"/></svg>
<svg style="left:1794px;top:591px" width="15" height="12"><rect width="15" height="4" fill="#fff"/><rect y="4" width="15" height="4" fill="#0039a6"/><rect y="8" width="15" height="4" fill="#d52b1e"/></svg>
<svg style="left:1794px;top:626px" width="15" height="12"><rect width="15" height="12" fill="#c60b1e"/><rect y="3" width="15" height="6" fill="#ffc400"/><rect x="3" y="4.5" width="2.5" height="3" fill="#ad1519"/></svg>
<svg style="left:1620px;top:905px" width="70" height="85" viewBox="0 0 70 85"><defs><radialGradient id="eg" cx="0.4" cy="0.3" r="0.8"><stop offset="0" stop-color="#fbe97e"/><stop offset="0.7" stop-color="#f5d877"/><stop offset="1" stop-color="#f2c27a"/></radialGradient></defs><g transform="translate(0,-4)"><ellipse cx="33.5" cy="46" rx="29.7" ry="40" fill="url(#eg)" opacity="0.85"/><path d="M5 36Q12 50 32 49Q50 47 62 55L62 50Q50 42 33 45Q14 47 5 33Z" fill="#ef9c9a" opacity="0.45"/><path d="M22 6Q11 22 15 36Q19 46 34 46Q51 45 55 56Q59 68 51 83L48 83Q54 68 49 59Q44 51 32 52Q14 53 11 38Q9 20 22 6Z" fill="#ffffff" opacity="0.92"/></g></svg>
<svg style="left:1690px;top:905px" width="140" height="80" viewBox="0 0 140 80"><path d="M4 11H8.5V48H4Z M8 33L27 11H32L13 33Z M13 28L31 48H26L10 31Z" fill="#f9a97f"/><path d="M37 16L45 11H48V48H43.5V17L38 20Z" fill="#f9a97f"/><text x="56" y="49" font-size="44" font-weight="bold" fill="#78c676" textLength="42" lengthAdjust="spacingAndGlyphs">源</text><path d="M58 17L55 5L60 12L63 3L66 12L71 5L68 17Z" fill="#78c676"/><text x="96" y="50" font-size="42" font-weight="bold" fill="#f9a97f" textLength="38" lengthAdjust="spacingAndGlyphs">码</text></svg>
<div class="t" style="left:1692px;top:967px;font-family:Liberation Mono;font-size:17px;color:#64bd62;letter-spacing:6.7px">k1ym.com</div>
<div class="t" style="left:1620px;top:951px;font-size:20px;color:rgba(110,110,110,0.5)">激活 Windows</div>
<div class="t" style="left:1619px;top:977px;font-size:15px;color:rgba(110,110,110,0.45);letter-spacing:0.9px">转到"设置"以激活 Windows。</div>
<svg style="left:0;top:0" width="1854" height="1017"><polygon points="1427.7,662.7 1707.6,370.1 1709.9,374.9 1716.2,354.8 1696.5,362.3 1701.5,364.3 1426.3,661.3" fill="#fe1e0e"/></svg>
</body></html>
